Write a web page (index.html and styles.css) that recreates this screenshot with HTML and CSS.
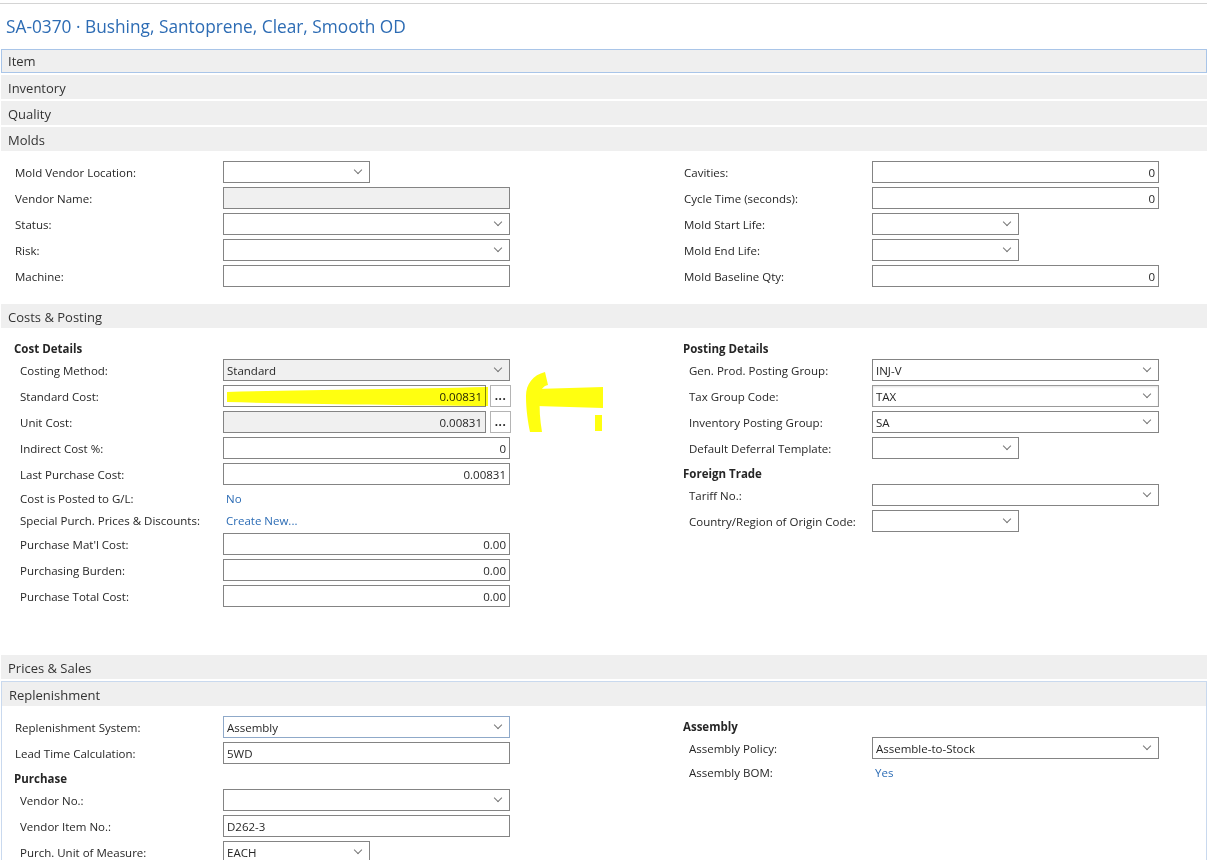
FILE: index.html
```html
<!DOCTYPE html>
<html lang="en">
<head>
    <meta charset="UTF-8">
    <title>SA-0370 · Bushing, Santoprene, Clear, Smooth OD</title>
    <link rel="stylesheet" href="styles.css">
</head>
<body>

    <div class="topline"></div>
    <h1 class="title">SA-0370 · Bushing, Santoprene, Clear, Smooth OD</h1>

    <!-- Collapsed tabs -->
    <div class="band focus">Item</div>
    <div class="band">Inventory</div>
    <div class="band">Quality</div>
    <div class="band">Molds</div>

    <!-- Molds -->
    <div class="fields molds">
        <div class="col left">
            <div class="row"><span class="lbl">Mold Vendor Location:</span><div class="ctl short"><span class="chev"></span></div></div>
            <div class="row"><span class="lbl">Vendor Name:</span><div class="ctl full ro"></div></div>
            <div class="row"><span class="lbl">Status:</span><div class="ctl full"><span class="chev"></span></div></div>
            <div class="row"><span class="lbl">Risk:</span><div class="ctl full"><span class="chev"></span></div></div>
            <div class="row"><span class="lbl">Machine:</span><div class="ctl full"></div></div>
        </div>
        <div class="col right">
            <div class="row"><span class="lbl">Cavities:</span><div class="ctl full num">0</div></div>
            <div class="row"><span class="lbl">Cycle Time (seconds):</span><div class="ctl full num">0</div></div>
            <div class="row"><span class="lbl">Mold Start Life:</span><div class="ctl short"><span class="chev"></span></div></div>
            <div class="row"><span class="lbl">Mold End Life:</span><div class="ctl short"><span class="chev"></span></div></div>
            <div class="row"><span class="lbl">Mold Baseline Qty:</span><div class="ctl full num">0</div></div>
        </div>
    </div>

    <!-- Costs & Posting -->
    <div class="band">Costs &amp; Posting</div>
    <div class="fields costs">
        <div class="col left">
            <div class="grp">Cost Details</div>
            <div class="row ind"><span class="lbl">Costing Method:</span><div class="ctl full ro">Standard<span class="chev"></span></div></div>
            <div class="row ind"><span class="lbl">Standard Cost:</span><div class="ctl num lookup">0.00831</div><span class="dots">...</span></div>
            <div class="row ind"><span class="lbl">Unit Cost:</span><div class="ctl num lookup ro">0.00831</div><span class="dots">...</span></div>
            <div class="row ind"><span class="lbl">Indirect Cost %:</span><div class="ctl full num">0</div></div>
            <div class="row ind"><span class="lbl">Last Purchase Cost:</span><div class="ctl full num">0.00831</div></div>
            <div class="row ind text"><span class="lbl">Cost is Posted to G/L:</span><span class="link">No</span></div>
            <div class="row ind text"><span class="lbl">Special Purch. Prices &amp; Discounts:</span><span class="link">Create New...</span></div>
            <div class="row ind"><span class="lbl">Purchase Mat'l Cost:</span><div class="ctl full num">0.00</div></div>
            <div class="row ind"><span class="lbl">Purchasing Burden:</span><div class="ctl full num">0.00</div></div>
            <div class="row ind"><span class="lbl">Purchase Total Cost:</span><div class="ctl full num">0.00</div></div>
        </div>
        <div class="col right">
            <div class="grp">Posting Details</div>
            <div class="row ind"><span class="lbl">Gen. Prod. Posting Group:</span><div class="ctl full">INJ-V<span class="chev"></span></div></div>
            <div class="row ind"><span class="lbl">Tax Group Code:</span><div class="ctl full hover">TAX<span class="chev"></span></div></div>
            <div class="row ind"><span class="lbl">Inventory Posting Group:</span><div class="ctl full">SA<span class="chev"></span></div></div>
            <div class="row ind"><span class="lbl">Default Deferral Template:</span><div class="ctl short"><span class="chev"></span></div></div>
            <div class="grp">Foreign Trade</div>
            <div class="row ind"><span class="lbl">Tariff No.:</span><div class="ctl full"><span class="chev"></span></div></div>
            <div class="row ind"><span class="lbl">Country/Region of Origin Code:</span><div class="ctl short"><span class="chev"></span></div></div>
        </div>
    </div>

    <div class="band">Prices &amp; Sales</div>

    <!-- Replenishment (expanded, focused) -->
    <div class="section focus">
        <div class="band">Replenishment</div>
        <div class="fields replen">
            <div class="col left">
                <div class="row"><span class="lbl">Replenishment System:</span><div class="ctl full active">Assembly<span class="chev"></span></div></div>
                <div class="row"><span class="lbl">Lead Time Calculation:</span><div class="ctl full">5WD</div></div>
                <div class="grp">Purchase</div>
                <div class="row ind"><span class="lbl">Vendor No.:</span><div class="ctl full"><span class="chev"></span></div></div>
                <div class="row ind"><span class="lbl">Vendor Item No.:</span><div class="ctl full">D262-3</div></div>
                <div class="row ind"><span class="lbl">Purch. Unit of Measure:</span><div class="ctl short">EACH<span class="chev"></span></div></div>
            </div>
            <div class="col right">
                <div class="grp">Assembly</div>
                <div class="row ind"><span class="lbl">Assembly Policy:</span><div class="ctl full">Assemble-to-Stock<span class="chev"></span></div></div>
                <div class="row ind text"><span class="lbl">Assembly BOM:</span><span class="link">Yes</span></div>
            </div>
        </div>
    </div>

    <!-- Highlighter marks drawn over the screenshot -->
    <svg class="marker" width="1207" height="860" viewBox="0 0 1207 860">
        <path d="M227 392 C300 390 400 389 488 387 L488 406 C400 405 300 404 227 402 Z"/>
        <path d="M536 389 L603 387 L603 408 L536 406 Z"/>
        <path d="M545 372 C533 375 526 384 526 396 C526 410 528 422 530 432 L542 432 C540 420 539 408 540 397 C540 390 543 386 548 385 Z"/>
        <path d="M595 415 L602 415 L602 431 L595 431 Z"/>
    </svg>

</body>
</html>
```

FILE: styles.css
```css
/* General */
body {
    margin: 0;
    font-family: "Segoe UI", "Open Sans", sans-serif;
    font-size: 11.5px;
    color: #262626;
    background: #fff;
    position: relative;
    overflow: hidden;
}

.topline {
    height: 3px;
    border-bottom: 1px solid #d4d4d4;
}

.title {
    margin: 0;
    height: 45px;
    padding: 11px 6px 0;
    box-sizing: border-box;
    font-size: 17.3px;
    font-weight: normal;
    line-height: 24px;
    color: #2d6cb4;
}

/* Tab bands */
.band {
    height: 24px;
    margin: 0 0 2px 1px;
    padding-left: 7px;
    box-sizing: border-box;
    background: #efefef;
    font-size: 13px;
    line-height: 26px;
    color: #333;
}

.band.focus {
    border: 1px solid #a9c5e8;
    padding-left: 6px;
    line-height: 22px;
}

.section.focus {
    margin-left: 1px;
    border: 1px solid #c9d9ee;
    border-bottom: none;
}

.section.focus .band {
    margin-left: 0;
}

.section.focus .fields {
    padding-left: 12px;
}

/* Field area */
.fields {
    display: grid;
    grid-template-columns: 669px 1fr;
    padding: 6px 0 0 14px;
}

.fields.molds {
    padding-bottom: 15px;
}

.fields.costs {
    padding-bottom: 46px;
}

.fields.replen {
    padding-top: 6px;
}

.col.left {
    --lw: 209px;
}

.col.right {
    --lw: 189px;
}

.grp {
    height: 21px;
    padding-top: 4px;
    box-sizing: border-box;
    line-height: 17px;
    font-weight: bold;
}

.row {
    display: flex;
    align-items: center;
    height: 26px;
}

.row.text {
    height: 22px;
}

.lbl {
    width: var(--lw);
    flex: none;
    padding-left: 1px;
    box-sizing: border-box;
    white-space: nowrap;
}

.row.ind .lbl {
    padding-left: 6px;
}

/* Controls */
.ctl {
    display: flex;
    align-items: center;
    height: 22px;
    padding: 0 3px;
    box-sizing: border-box;
    border: 1px solid #848484;
    background: #fff;
    white-space: nowrap;
}

.ctl.full {
    width: 287px;
}

.ctl.short {
    width: 147px;
}

.ctl.lookup {
    width: 263px;
}

.ctl.ro {
    background: #f0f0f0;
}

.ctl.num {
    justify-content: flex-end;
}

.ctl.hover {
    border-color: #9a9a9a;
    box-shadow: inset 0 1px 2px rgba(0, 0, 0, 0.12);
}

.ctl.active {
    border-color: #8fa9c9;
}

.chev {
    flex: none;
    width: 5px;
    height: 5px;
    margin: -4px 5px 0 auto;
    border-right: 1px solid #777;
    border-bottom: 1px solid #777;
    transform: rotate(45deg);
}

.dots {
    width: 21px;
    height: 22px;
    margin-left: 4px;
    box-sizing: border-box;
    border: 1px solid #b4b4b4;
    text-align: center;
    font-weight: bold;
    line-height: 20px;
    letter-spacing: 0.5px;
}

.link {
    padding-left: 3px;
    color: #2c6cb5;
}

/* Highlighter */
.marker {
    position: absolute;
    top: 0;
    left: 0;
    pointer-events: none;
    mix-blend-mode: multiply;
}

.marker path {
    fill: #ffff10;
}
```
